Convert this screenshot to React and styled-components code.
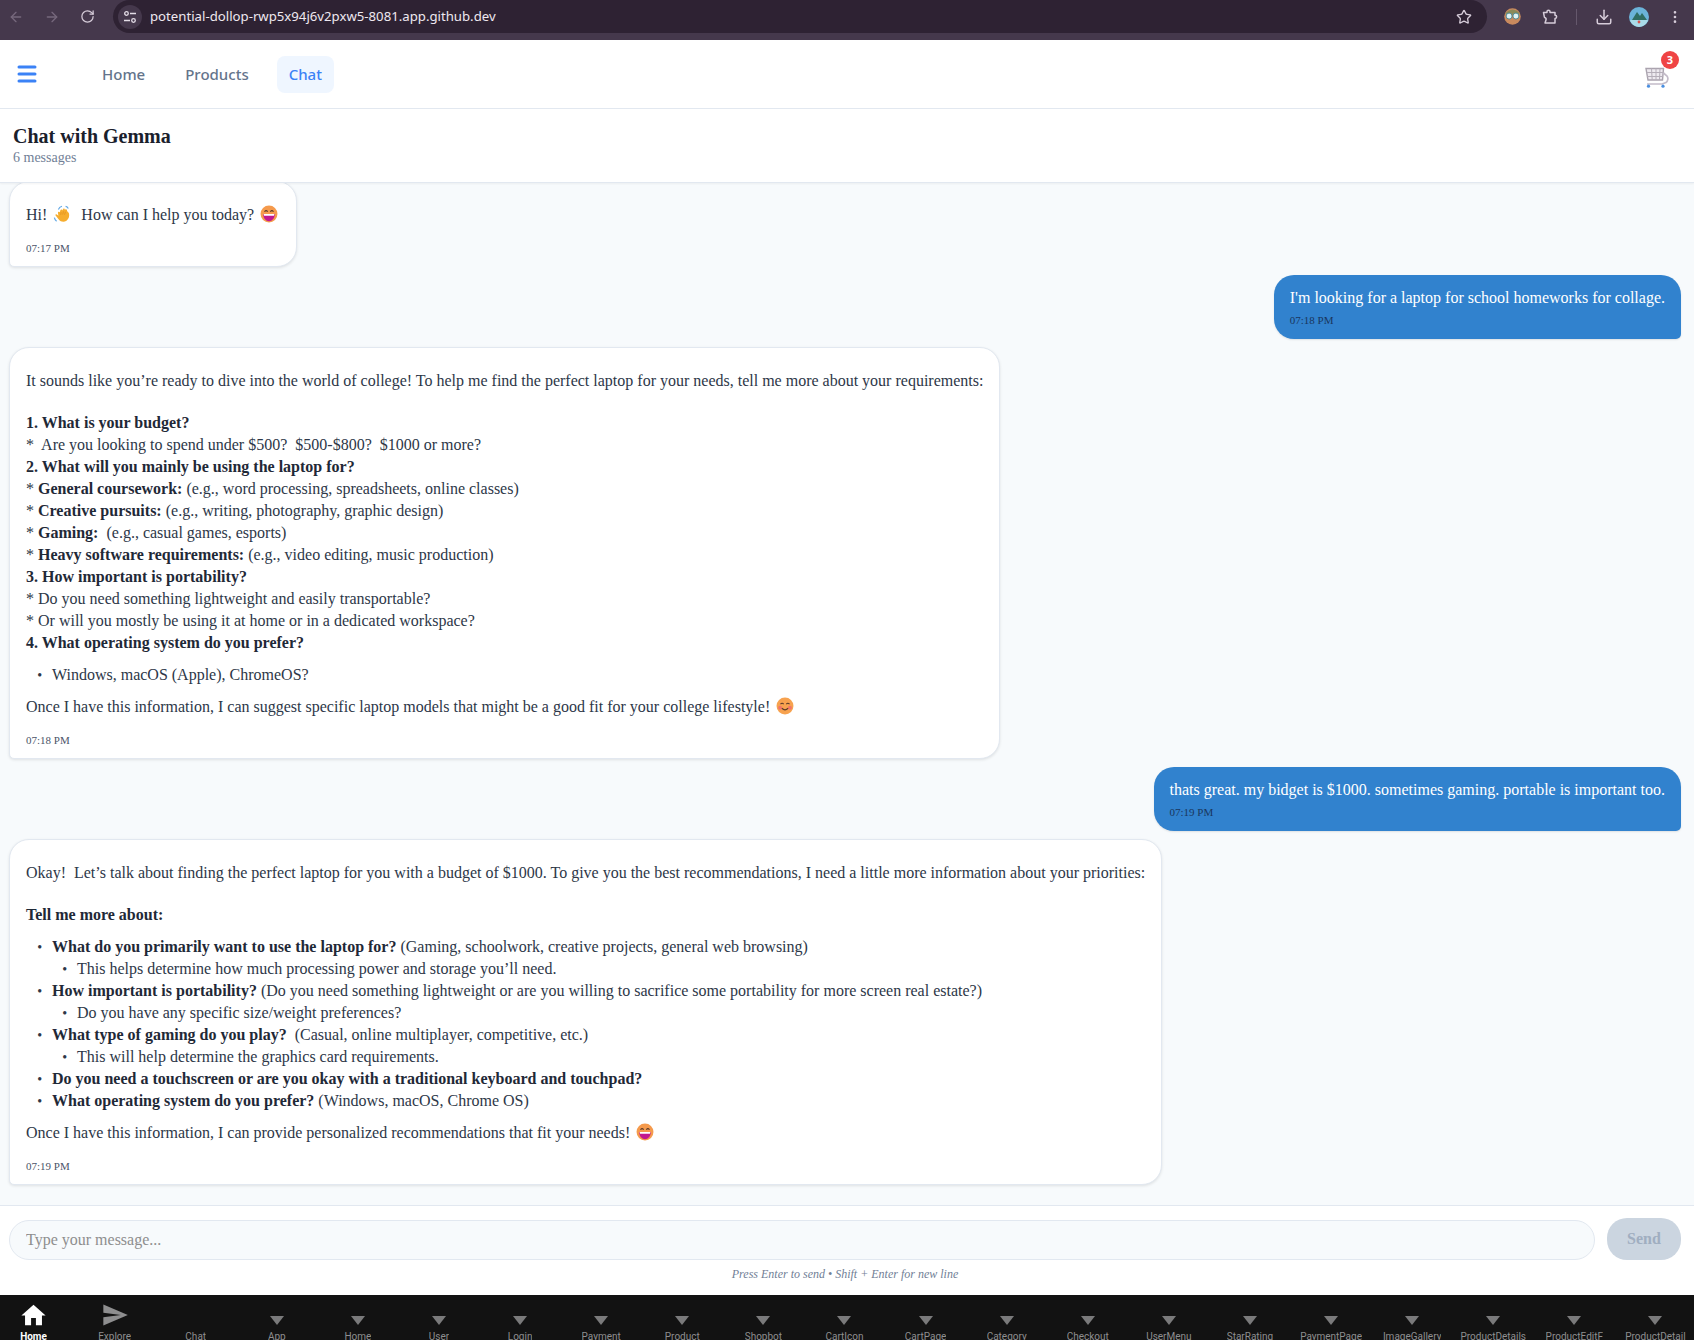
import React from "react";
import styled, { createGlobalStyle } from "styled-components";
import { ArrowLeft, ArrowRight, RotateCw, Star, Download, MoreVertical, Menu } from "lucide-react";
import { MdHome, MdSend } from "react-icons/md";

const GlobalStyle = createGlobalStyle`
  html, body { margin: 0; padding: 0; height: 100%; overflow: hidden; }
  * { box-sizing: border-box; }
  #root { height: 100%; }
`;

const tabs = [
  "Home", "Explore", "Chat", "App", "Home", "User", "Login", "Payment", "Product", "Shopbot", "CartIcon",
  "CartPage", "Category", "Checkout", "UserMenu", "StarRating", "PaymentPage", "ImageGallery",
  "ProductDetails", "ProductEditF", "ProductDetail",
];

function Emoji({ kind }) {
  if (kind === "wave") {
    return (
      <EmojiSvg viewBox="0 0 20 20">
        <path d="M2.5 11 C3 10 4 10 5 11 L6 12 L5.5 8.5 C5.5 7.2 7 7 7.6 8 L8.3 5.6 C8.8 4.4 10.2 4.8 10.2 6 L11.3 4.4 C12 3.4 13.4 4.2 13 5.4 L14.2 4.8 C15.2 4.6 15.8 5.6 15.6 6.6 L17.6 9 C18.6 12 17.8 15.6 15 17.4 C12 19.4 8.4 18.6 6.4 16 Z" fill="#f6ad2e" />
        <path d="M9 8 L8.6 11 M11.6 7 L10.8 10.6 M14 7.4 L12.8 10.8" stroke="#e08e1d" strokeWidth=".8" fill="none" />
        <path d="M6 5 Q7 2 10 1.4 M1.5 14 Q2 16.5 4 18 M14 1.6 Q16 2 17 4" stroke="#62a8e5" strokeWidth="1.3" fill="none" />
      </EmojiSvg>
    );
  }
  if (kind === "grin") {
    return (
      <EmojiSvg viewBox="0 0 20 20">
        <circle cx="10" cy="10" r="9.4" fill="#f59a4c" />
        <path d="M3.6 10 H16.4 C16.4 15 13.4 18 10 18 C6.6 18 3.6 15 3.6 10Z" fill="#c2188f" />
        <path d="M4 10 H16 L15.5 12 H4.5Z" fill="#fff" />
        <path d="M5 7.5 Q6.8 5 8.5 7.5 M11.5 7.5 Q13.2 5 15 7.5" stroke="#5b3a29" strokeWidth="1.2" fill="none" />
      </EmojiSvg>
    );
  }
  return (
    <EmojiSvg viewBox="0 0 20 20">
      <circle cx="10" cy="10" r="9.4" fill="#f7a24f" />
      <circle cx="4.6" cy="12" r="2.2" fill="#f2756a" />
      <circle cx="15.4" cy="12" r="2.2" fill="#f2756a" />
      <path d="M5 8 Q6.8 5.8 8.5 8 M11.5 8 Q13.2 5.8 15 8 M6.5 12.5 Q10 16 13.5 12.5" stroke="#5b3a29" strokeWidth="1.2" fill="none" />
    </EmojiSvg>
  );
}

function CartIcon() {
  return (
    <svg width="24" height="21" viewBox="0 0 24 21" fill="none">
      <path d="M1 1.5 L18.5 1.5 L17.5 13 L3 13 Z" fill="#eeeaf0" stroke="#aaa3ae" strokeWidth="1.4" />
      <path d="M6.5 1.5 L7.2 13 M11 1.5 V13 M15 1.5 L14.5 13 M1.6 5.5 H18 M2.2 9.5 H17.8" stroke="#b5aeb9" strokeWidth="1" />
      <path d="M18.5 6 L22 9 C23.5 11 23 14 21 15.5 L17 17 H2" stroke="#c4bcc9" strokeWidth="1.7" />
      <circle cx="3.5" cy="19.2" r="1.6" fill="#4a8fe0" />
      <circle cx="18" cy="19.2" r="1.6" fill="#4a8fe0" />
    </svg>
  );
}

export default function App() {
  return (
    <Page>
      <GlobalStyle />
      <BrowserBar>
        <BrowserNav>
          <ArrowLeft size={16} color="#76687c" />
          <ArrowRight size={16} color="#76687c" />
          <RotateCw size={15} color="#d6ccd9" />
        </BrowserNav>
        <AddressBar>
          <SiteChip>
            <svg width="16" height="14" viewBox="0 0 16 14" fill="none" stroke="#e4dde7" strokeWidth="1.3">
              <circle cx="4.5" cy="3.5" r="1.8" />
              <path d="M8 3.5 H14 M2 10.5 H8" />
              <circle cx="11.5" cy="10.5" r="1.8" />
            </svg>
          </SiteChip>
          <Url>potential-dollop-rwp5x94j6v2pxw5-8081.app.github.dev</Url>
          <Star size={16} color="#d6ccd9" />
        </AddressBar>
        <Extensions>
          <svg width="17" height="17" viewBox="0 0 16 16">
            <circle cx="8" cy="8" r="7.8" fill="#c98a5e" />
            <path d="M1 5 Q8 -2 15 5 L14 6 H2Z" fill="#8a8a5a" />
            <circle cx="4.8" cy="7.6" r="2.8" fill="#dff3f5" stroke="#3f7f8f" strokeWidth=".8" />
            <circle cx="11.2" cy="7.6" r="2.8" fill="#dff3f5" stroke="#3f7f8f" strokeWidth=".8" />
          </svg>
          <PuzzleSlot>
            <svg width="16" height="16" viewBox="0 0 16 16" fill="none" stroke="#d6ccd9" strokeWidth="1.5" strokeLinejoin="round">
              <path d="M1.5 3.5 H5 V2.5 C5 .8 8 .8 8 2.5 V3.5 H13 V6.2 C15.2 6.2 15.2 9.4 13 9.4 V14 H3 L4 11 C4.4 9.8 3.4 8.6 2.4 8.2 L1.5 3.5Z" />
            </svg>
          </PuzzleSlot>
          <BarDivider />
          <Download size={18} color="#d6ccd9" />
          <Avatar width="20" height="20" viewBox="0 0 20 20">
            <circle cx="10" cy="10" r="10" fill="#6bb3d9" />
            <path d="M3 13 L8 5 L11 9 L13 6 L18 13Z" fill="#2f6d62" />
            <path d="M1 13 H19 C18 17 14 20 10 20 C6 20 2 17 1 13Z" fill="#a9dbe8" />
            <circle cx="10" cy="15" r="1.4" fill="#d9554f" />
          </Avatar>
          <MoreVertical size={16} color="#d6ccd9" />
        </Extensions>
      </BrowserBar>

      <NavBar>
        <Burger><Menu size={24} strokeWidth={3} color="#3b82f6" /></Burger>
        <NavLinks>
          <NavLink>Home</NavLink>
          <NavLink>Products</NavLink>
          <NavLink $active>Chat</NavLink>
        </NavLinks>
        <Cart>
          <CartIcon />
          <Badge>3</Badge>
        </Cart>
      </NavBar>

      <ChatHeader>
        <Title>Chat with Gemma</Title>
        <Count>6 messages</Count>
      </ChatHeader>

      <Messages>
        <BotBubble>
          <Para>Hi! <Emoji kind="wave" />  How can I help you today? <Emoji kind="grin" /></Para>
          <Time>07:17 PM</Time>
        </BotBubble>

        <UserBubble>
          <UserText>I'm looking for a laptop for school homeworks for collage.</UserText>
          <UserTime>07:18 PM</UserTime>
        </UserBubble>

        <BotBubble>
          <Para $wide>It sounds like you’re ready to dive into the world of college! To help me find the perfect laptop for your needs, tell me more about your requirements:</Para>
          <Para>
            <b>1. What is your budget?</b>{"\n"}
            *  Are you looking to spend under $500?  $500-$800?  $1000 or more?{"\n"}
            <b>2. What will you mainly be using the laptop for?</b>{"\n"}
            * <b>General coursework:</b> (e.g., word processing, spreadsheets, online classes){"\n"}
            * <b>Creative pursuits:</b> (e.g., writing, photography, graphic design){"\n"}
            * <b>Gaming:</b>  (e.g., casual games, esports){"\n"}
            * <b>Heavy software requirements:</b> (e.g., video editing, music production){"\n"}
            <b>3. How important is portability?</b>{"\n"}
            * Do you need something lightweight and easily transportable?{"\n"}
            * Or will you mostly be using it at home or in a dedicated workspace?{"\n"}
            <b>4. What operating system do you prefer?</b>
          </Para>
          <List>
            <li>Windows, macOS (Apple), ChromeOS?</li>
          </List>
          <Para>Once I have this information, I can suggest specific laptop models that might be a good fit for your college lifestyle! <Emoji kind="smile" /></Para>
          <Time>07:18 PM</Time>
        </BotBubble>

        <UserBubble>
          <UserText>thats great. my bidget is $1000. sometimes gaming. portable is important too.</UserText>
          <UserTime>07:19 PM</UserTime>
        </UserBubble>

        <BotBubble>
          <Para $wide>Okay!  Let’s talk about finding the perfect laptop for you with a budget of $1000. To give you the best recommendations, I need a little more information about your priorities:</Para>
          <Para><b>Tell me more about:</b></Para>
          <List>
            <li>
              <b>What do you primarily want to use the laptop for?</b> (Gaming, schoolwork, creative projects, general web browsing)
              <SubList><li>This helps determine how much processing power and storage you’ll need.</li></SubList>
            </li>
            <li>
              <b>How important is portability?</b> (Do you need something lightweight or are you willing to sacrifice some portability for more screen real estate?)
              <SubList><li>Do you have any specific size/weight preferences?</li></SubList>
            </li>
            <li>
              <b>What type of gaming do you play?</b>  (Casual, online multiplayer, competitive, etc.)
              <SubList><li>This will help determine the graphics card requirements.</li></SubList>
            </li>
            <li><b>Do you need a touchscreen or are you okay with a traditional keyboard and touchpad?</b></li>
            <li><b>What operating system do you prefer?</b> (Windows, macOS, Chrome OS)</li>
          </List>
          <Para>Once I have this information, I can provide personalized recommendations that fit your needs! <Emoji kind="grin" /></Para>
          <Time>07:19 PM</Time>
        </BotBubble>
      </Messages>

      <Composer>
        <InputRow>
          <MessageInput placeholder="Type your message..." readOnly />
          <SendButton>Send</SendButton>
        </InputRow>
        <Hint>Press Enter to send • Shift + Enter for new line</Hint>
      </Composer>

      <TabBar>
        <TabStrip>
          {tabs.map((label, i) => (
            <Tab key={label + i}>
              <TabIcon>
                {i === 0 && <MdHome size={29} color="#fff" />}
                {i === 1 && <MdSend size={28} color="#8e8e8f" />}
                {i > 2 && <Triangle />}
              </TabIcon>
              <TabLabel $active={i === 0}>{label}</TabLabel>
            </Tab>
          ))}
        </TabStrip>
      </TabBar>
    </Page>
  );
}

const Page = styled.div`
  width: 1694px;
  height: 1340px;
  display: flex;
  flex-direction: column;
  overflow: hidden;
  background: #fff;
  font-family: "Liberation Serif", "Times New Roman", serif;
`;

const BrowserBar = styled.div`
  height: 40px;
  flex-shrink: 0;
  display: flex;
  align-items: flex-start;
  background: #45384c;
`;

const BrowserNav = styled.div`
  width: 113px;
  height: 33px;
  padding: 0 18px 0 8px;
  display: flex;
  align-items: center;
  justify-content: space-between;
`;

const AddressBar = styled.div`
  width: 1374px;
  height: 33px;
  padding: 0 15px 0 5px;
  display: flex;
  align-items: center;
  border-radius: 17px;
  background: #2e2233;
`;

const SiteChip = styled.div`
  width: 24px;
  height: 24px;
  display: flex;
  align-items: center;
  justify-content: center;
  border-radius: 50%;
  background: #45384c;
`;

const Url = styled.span`
  flex: 1;
  margin-left: 8px;
  padding-bottom: 2px;
  font-family: "Noto Sans", "Open Sans", sans-serif;
  font-size: 13.2px;
  color: #eee8f0;
`;

const Extensions = styled.div`
  flex: 1;
  height: 33px;
  padding-left: 17px;
  display: flex;
  align-items: center;
  gap: 18px;
`;

const PuzzleSlot = styled.span`
  margin-left: 3px;
  display: flex;
`;

const BarDivider = styled.div`
  width: 1px;
  height: 16px;
  background: #65586c;
`;

const Avatar = styled.svg`
  margin-left: -2px;
`;

const NavBar = styled.header`
  height: 69px;
  flex-shrink: 0;
  padding: 0 25px 0 15px;
  display: flex;
  align-items: center;
  border-bottom: 1px solid #e2e8f0;
`;

const Burger = styled.div`
  width: 24px;
  display: flex;
`;

const NavLinks = styled.nav`
  flex: 1;
  margin-left: 51px;
  display: flex;
  gap: 16px;
`;

const NavLink = styled.a`
  height: 37px;
  padding: 0 12px;
  display: flex;
  align-items: center;
  border-radius: 8px;
  font-family: "Noto Sans", "Open Sans", sans-serif;
  font-size: 15px;
  font-weight: 500;
  color: ${(p) => (p.$active ? "#3b82f6" : "#64748b")};
  background: ${(p) => (p.$active ? "#eff6ff" : "transparent")};
`;

const Cart = styled.div`
  position: relative;
  width: 24px;
  height: 21px;
  top: 3px;
`;

const Badge = styled.span`
  position: absolute;
  top: -16px;
  right: -10px;
  width: 18px;
  height: 18px;
  display: flex;
  align-items: center;
  justify-content: center;
  border-radius: 50%;
  background: #ef4444;
  color: #fff;
  font-family: "Noto Sans", sans-serif;
  font-size: 11px;
  font-weight: 700;
`;

const ChatHeader = styled.div`
  height: 74px;
  flex-shrink: 0;
  padding: 16px 13px 0;
  background: #fff;
  border-bottom: 1px solid #e2e8f0;
  box-shadow: 0 1px 2px rgba(0, 0, 0, 0.05);
  position: relative;
  z-index: 1;
`;

const Title = styled.h1`
  margin: 0;
  font-size: 20px;
  line-height: 23px;
  font-weight: 700;
  color: #1a202c;
`;

const Count = styled.div`
  margin-top: 2px;
  font-size: 14px;
  line-height: 16px;
  color: #718096;
`;

const Messages = styled.main`
  flex: 1;
  min-height: 0;
  padding: 0 13px 20px 9px;
  display: flex;
  flex-direction: column;
  justify-content: flex-end;
  gap: 8px;
  overflow: hidden;
  background: #f7fafc;
`;

const BotBubble = styled.div`
  flex-shrink: 0;
  align-self: flex-start;
  padding: 12px 16px 11px;
  border: 1px solid #e2e8f0;
  border-radius: 20px 20px 20px 5px;
  background: #fff;
  box-shadow: 0 1px 3px rgba(0, 0, 0, 0.1);
`;

const Para = styled.p`
  margin: 10px 0 ${(p) => (p.$wide ? "20px" : "10px")};
  font-size: 16px;
  line-height: 22px;
  color: #2d3748;
  white-space: pre-wrap;
  b { color: #1f2937; }
`;

const List = styled.ul`
  margin: 10px 0;
  padding-left: 26px;
  font-size: 16px;
  line-height: 22px;
  color: #2d3748;
  white-space: pre-wrap;
  b { color: #1f2937; }
  li::marker { content: "•\\2002\\2009"; font-size: 14px; }
`;

const SubList = styled.ul`
  margin: 0;
  padding-left: 25px;
  list-style: disc;
`;

const Time = styled.div`
  margin-top: 16px;
  font-size: 11px;
  line-height: 13px;
  color: #4a5568;
`;

const UserBubble = styled.div`
  flex-shrink: 0;
  align-self: flex-end;
  padding: 12px 16px;
  border-radius: 20px 20px 5px 20px;
  background: #3182ce;
  box-shadow: 0 1px 2px rgba(0, 0, 0, 0.1);
`;

const UserText = styled.div`
  font-size: 16px;
  line-height: 22px;
  color: #fff;
`;

const UserTime = styled(Time)`
  margin-top: 5px;
  color: #1a365d;
`;

const EmojiSvg = styled.svg`
  display: inline-block;
  width: 22px;
  height: 18px;
  vertical-align: -3px;
`;

const Composer = styled.div`
  height: 90px;
  flex-shrink: 0;
  padding: 12px 13px 0 9px;
  background: #fff;
  border-top: 1px solid #e2e8f0;
`;

const InputRow = styled.div`
  display: flex;
  align-items: flex-end;
  gap: 12px;
`;

const MessageInput = styled.input`
  flex: 1;
  height: 40px;
  padding: 0 16px;
  border: 1px solid #e2e8f0;
  border-radius: 20px;
  outline: none;
  background: #f7fafc;
  font-family: inherit;
  font-size: 16px;
  &::placeholder { color: #8e8e8e; }
`;

const SendButton = styled.button`
  width: 74px;
  height: 42px;
  border: 0;
  border-radius: 20px;
  background: #cbd5e0;
  color: #a0aec0;
  font-family: inherit;
  font-size: 16px;
  font-weight: 700;
`;

const Hint = styled.div`
  margin-top: 7px;
  text-align: center;
  font-size: 12px;
  line-height: 14px;
  font-style: italic;
  color: #718096;
`;

const TabBar = styled.nav`
  height: 45px;
  flex-shrink: 0;
  overflow: hidden;
  background: #121212;
`;

const TabStrip = styled.div`
  width: 1703px;
  margin-left: -7px;
  display: grid;
  grid-template-columns: repeat(21, 81.1px);
`;

const Tab = styled.div`
  min-width: 0;
  display: flex;
  flex-direction: column;
  align-items: center;
`;

const TabIcon = styled.div`
  height: 36px;
  padding-top: 4px;
  display: flex;
  align-items: center;
  justify-content: center;
`;

const Triangle = styled.span`
  width: 0;
  height: 0;
  margin-top: 10px;
  border-left: 7.5px solid transparent;
  border-right: 7.5px solid transparent;
  border-top: 9px solid #7a7a7b;
`;

const TabLabel = styled.span`
  max-width: 100%;
  overflow: hidden;
  white-space: nowrap;
  font-family: "Roboto", "Liberation Sans", sans-serif;
  font-size: 10px;
  line-height: 12px;
  font-weight: ${(p) => (p.$active ? 700 : 400)};
  color: ${(p) => (p.$active ? "#fff" : "#8e8e8f")};
`;
